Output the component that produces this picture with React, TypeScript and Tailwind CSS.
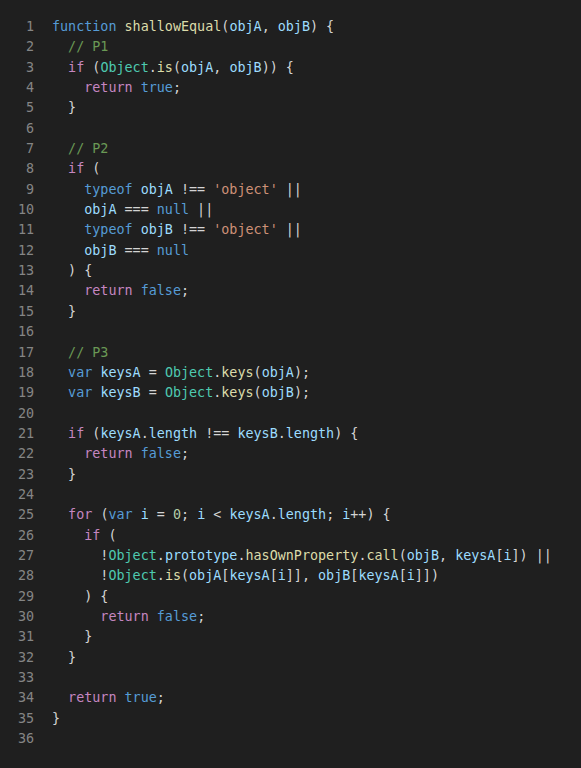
import React from "react";

type Tok = [string, string];

// token colours
const K = "text-[#569cd6]"; // keyword / literal
const C = "text-[#c586c0]"; // control flow
const M = "text-[#6a9955]"; // comment
const F = "text-[#dcdcaa]"; // function name
const V = "text-[#9cdcfe]"; // variable
const T = "text-[#4ec9b0]"; // type
const S = "text-[#ce9178]"; // string
const N = "text-[#b5cea8]"; // number
const P = "text-[#d4d4d4]"; // punctuation

const lines: Tok[][] = [
  [["function ", K], ["shallowEqual", F], ["(", P], ["objA", V], [", ", P], ["objB", V], [") {", P]],
  [["  // P1", M]],
  [["  if ", C], ["(", P], ["Object", T], [".", P], ["is", F], ["(", P], ["objA", V], [", ", P], ["objB", V], [")) {", P]],
  [["    return ", C], ["true", K], [";", P]],
  [["  }", P]],
  [],
  [["  // P2", M]],
  [["  if ", C], ["(", P]],
  [["    typeof ", K], ["objA", V], [" !== ", P], ["'object'", S], [" ||", P]],
  [["    ", P], ["objA", V], [" === ", P], ["null", K], [" ||", P]],
  [["    typeof ", K], ["objB", V], [" !== ", P], ["'object'", S], [" ||", P]],
  [["    ", P], ["objB", V], [" === ", P], ["null", K]],
  [["  ) {", P]],
  [["    return ", C], ["false", K], [";", P]],
  [["  }", P]],
  [],
  [["  // P3", M]],
  [["  var ", K], ["keysA", V], [" = ", P], ["Object", T], [".", P], ["keys", F], ["(", P], ["objA", V], [");", P]],
  [["  var ", K], ["keysB", V], [" = ", P], ["Object", T], [".", P], ["keys", F], ["(", P], ["objB", V], [");", P]],
  [],
  [["  if ", C], ["(", P], ["keysA", V], [".", P], ["length", V], [" !== ", P], ["keysB", V], [".", P], ["length", V], [") {", P]],
  [["    return ", C], ["false", K], [";", P]],
  [["  }", P]],
  [],
  [["  for ", C], ["(", P], ["var ", K], ["i", V], [" = ", P], ["0", N], ["; ", P], ["i", V], [" < ", P], ["keysA", V], [".", P], ["length", V], ["; ", P], ["i", V], ["++) {", P]],
  [["    if ", C], ["(", P]],
  [["      !", P], ["Object", T], [".", P], ["prototype", V], [".", P], ["hasOwnProperty", F], [".", P], ["call", F], ["(", P], ["objB", V], [", ", P], ["keysA", V], ["[", P], ["i", V], ["]) ||", P]],
  [["      !", P], ["Object", T], [".", P], ["is", F], ["(", P], ["objA", V], ["[", P], ["keysA", V], ["[", P], ["i", V], ["]], ", P], ["objB", V], ["[", P], ["keysA", V], ["[", P], ["i", V], ["]])", P]],
  [["    ) {", P]],
  [["      return ", C], ["false", K], [";", P]],
  [["    }", P]],
  [["  }", P]],
  [],
  [["  return ", C], ["true", K], [";", P]],
  [["}", P]],
  [],
];

export default function App() {
  return (
    <div className="min-h-screen w-full bg-[#1f1f1f] pt-[17px] font-['DejaVu_Sans_Mono',monospace] text-[13.4px] leading-[20.35px]">
      {lines.map((toks, i) => (
        <div key={i} className="flex whitespace-pre">
          <span className="w-[34px] shrink-0 text-right text-[#858585]">{i + 1}</span>
          <span className="pl-[18px]">
            {toks.map(([text, cls], j) => (
              <span key={j} className={cls}>
                {text}
              </span>
            ))}
          </span>
        </div>
      ))}
    </div>
  );
}
